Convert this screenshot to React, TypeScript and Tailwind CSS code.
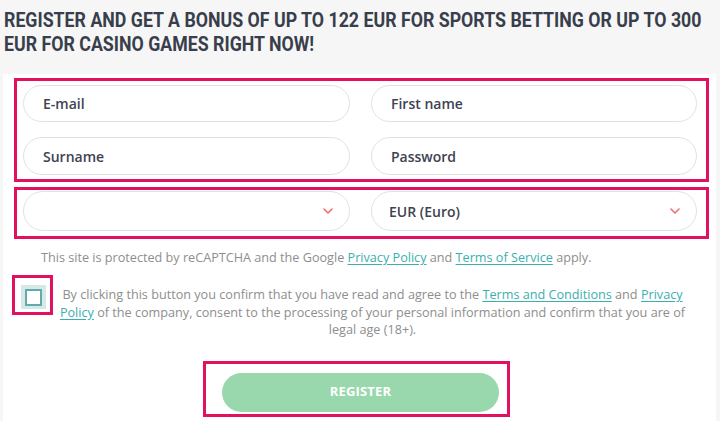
import React from "react";

const Chevron = () => (
  <svg width="10" height="6" viewBox="0 0 10 6" fill="none">
    <path d="M1 1L5 5L9 1" stroke="#f26d6d" strokeWidth="1.6" strokeLinecap="round" strokeLinejoin="round" />
  </svg>
);

const Field = ({ label, h }: { label: string; h: string }) => (
  <div className={`${h} rounded-full border border-[#e2e2e2] bg-white flex items-center pl-[19px]`}>
    <span className="text-[14px] font-semibold text-[#3e4251]" style={{ fontFamily: "'Open Sans', sans-serif" }}>
      {label}
    </span>
  </div>
);

const Link = ({ children }: { children: React.ReactNode }) => (
  <span className="text-[#3aafae] underline underline-offset-2">{children}</span>
);

export default function App() {
  return (
    <div className="w-[720px] h-[421px] bg-[#f6f6f6] overflow-hidden" style={{ fontFamily: "'Open Sans', sans-serif" }}>
      <div
        className="pt-[8px] pl-[4px] h-[74px] text-[20px] leading-[24px] font-bold text-[#383e4b] uppercase"
        style={{ fontFamily: "Roboto, sans-serif" }}
      >
        <div className="whitespace-nowrap origin-left scale-x-[0.888]">
          Register and get a bonus of up to 122 EUR for sports betting or up to 300
        </div>
        <div className="whitespace-nowrap origin-left scale-x-[0.888]">EUR for casino games right now!</div>
      </div>
      <div className="ml-[3px] w-[713px] h-[347px] bg-white pt-[4px]">
        <div className="ml-[11px] w-[695px] h-[104px] border-[3px] border-[#e1115f] pt-[4px] pl-[6px]">
          <div className="grid grid-cols-[327px_326px] gap-x-[21px] gap-y-[15px]">
            <Field label="E-mail" h="h-[37px]" />
            <Field label="First name" h="h-[37px]" />
            <Field label="Surname" h="h-[38px]" />
            <Field label="Password" h="h-[38px]" />
          </div>
        </div>
        <div className="mt-[5px] ml-[11px] w-[695px] h-[52px] border-[3px] border-[#e1115f] pt-[1px] pl-[6px]">
          <div className="grid grid-cols-[327px_326px] gap-x-[21px]">
            <div className="h-[40px] rounded-full border border-[#e2e2e2] bg-white flex items-center justify-end pr-[16px]">
              <Chevron />
            </div>
            <div className="h-[40px] rounded-full border border-[#e2e2e2] bg-white flex items-center justify-between pl-[17px] pr-[16px]">
              <span className="text-[14px] font-semibold text-[#3e4251]">EUR (Euro)</span>
              <Chevron />
            </div>
          </div>
        </div>
        <div className="mt-[9px] pl-[38px] h-[18px] text-[12.65px] leading-[18px] text-[#8e8e8e] whitespace-nowrap">
          This site is protected by reCAPTCHA and the Google <Link>Privacy Policy</Link> and{" "}
          <Link>Terms of Service</Link> apply.
        </div>
        <div className="mt-[9px] flex">
          <div className="ml-[9px] w-[41px] h-[40px] border-[3px] border-[#e1115f] pt-[7px] pl-[6px] shrink-0">
            <div className="w-[25px] h-[24px] bg-[#d6e8e8] flex items-center justify-center">
              <div className="w-[17px] h-[17px] border-2 border-[#62abab] bg-white" />
            </div>
          </div>
          <div className="ml-[4px] mt-[11px] w-[631px] text-center text-[12.65px] leading-[17.5px] text-[#8e8e8e] whitespace-nowrap">
            By clicking this button you confirm that you have read and agree to the <Link>Terms and Conditions</Link> and{" "}
            <Link>Privacy</Link>
            <br />
            <Link>Policy</Link> of the company, consent to the processing of your personal information and confirm that you are of
            <br />
            legal age (18+).
          </div>
        </div>
        <div className="mt-[22px] ml-[200px] w-[307px] h-[56px] border-[3px] border-[#e1115f] pt-[9px] pl-[16px]">
          <div className="w-[277px] h-[39px] rounded-full bg-[#99d8ad] flex items-center justify-center text-white text-[13px] font-bold tracking-[0.2px]">
            REGISTER
          </div>
        </div>
      </div>
    </div>
  );
}
